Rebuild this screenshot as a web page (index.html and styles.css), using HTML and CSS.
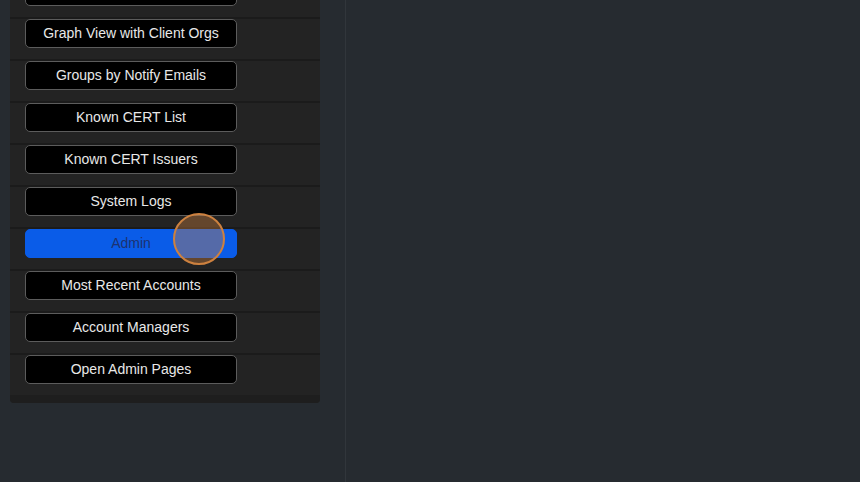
FILE: index.html
```html
<!DOCTYPE html>
<html>
<head>
<meta charset="utf-8">
<link rel="stylesheet" href="styles.css">
</head>
<body>
<div class="layout">
  <aside class="sidebar">
    <div class="panel">
      <div class="row"><button class="btn"></button></div>
      <div class="row"><button class="btn">Graph View with Client Orgs</button></div>
      <div class="row"><button class="btn">Groups by Notify Emails</button></div>
      <div class="row"><button class="btn">Known CERT List</button></div>
      <div class="row"><button class="btn">Known CERT Issuers</button></div>
      <div class="row"><button class="btn">System Logs</button></div>
      <div class="row"><button class="btn active">Admin<span class="cursor"></span></button></div>
      <div class="row"><button class="btn">Most Recent Accounts</button></div>
      <div class="row"><button class="btn">Account Managers</button></div>
      <div class="row"><button class="btn">Open Admin Pages</button></div>
      <div class="panel-foot"></div>
    </div>
  </aside>
  <main class="main"></main>
</div>
</body>
</html>
```

FILE: styles.css
```css
html, body {
  margin: 0;
  padding: 0;
  height: 100%;
  overflow: hidden;
  background: #262b30;
  font-family: "Liberation Sans", Arial, sans-serif;
}
.layout {
  display: flex;
  height: 482px;
}
.sidebar {
  width: 345px;
  flex: none;
  border-right: 1px solid #31363b;
}
.main {
  flex: 1;
}
.panel {
  margin: -25px 0 0 10px;
  width: 310px;
  background: #232323;
  border-radius: 0 0 4px 4px;
  overflow: hidden;
}
.row {
  border-top: 2px solid #1b1b1b;
  padding: 0 0 11px 15px;
  display: flex;
}
.btn {
  position: relative;
  width: 212px;
  height: 29px;
  box-sizing: border-box;
  background: #000;
  border: 1px solid #5c5c5c;
  border-radius: 5px;
  color: #e8e8e8;
  font-family: "Liberation Sans", Arial, sans-serif;
  font-size: 14px;
  padding: 0 0 1px 0;
  margin: 0;
  display: flex;
  align-items: center;
  justify-content: center;
}
.btn.active {
  background: #0a5ce8;
  border-color: #0a5ce8;
  color: #1d3270;
}
.cursor {
  position: absolute;
  left: 147px;
  top: -17px;
  width: 52px;
  height: 52px;
  border-radius: 50%;
  border: 2px solid #cd813f;
  background: rgba(208, 128, 64, 0.38);
  box-sizing: border-box;
  margin: 0;
}
.panel-foot {
  height: 8px;
  background: #1e1e1e;
}
```
